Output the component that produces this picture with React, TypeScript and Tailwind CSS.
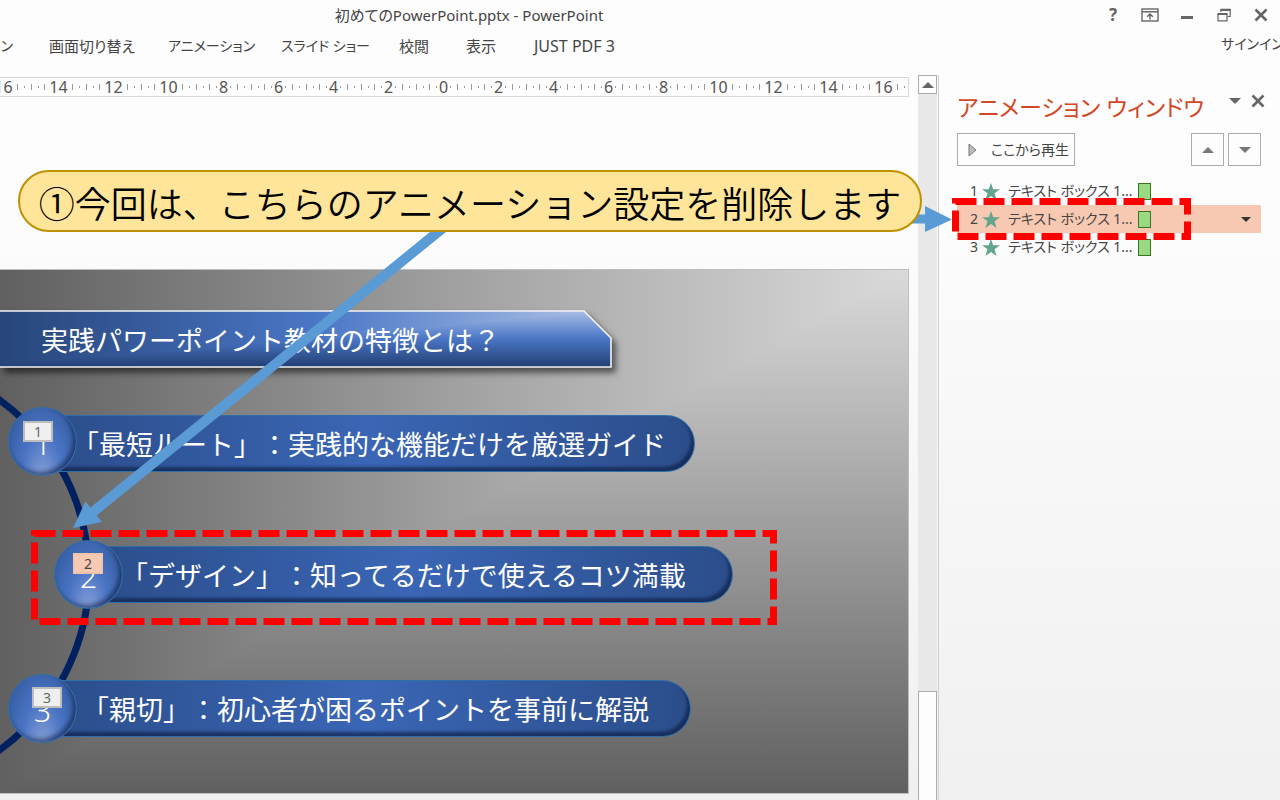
import React from 'react';

const TABS = [
  { label: '画面切り替え', size: 'w-[119px]' },
  { label: 'アニメーション', size: 'w-[113px] text-sm' },
  { label: 'スライド ショー', size: 'w-[118px] text-sm' },
  { label: '校閲', size: 'w-[67px]' },
  { label: '表示', size: 'w-[68px]' },
  { label: 'JUST PDF 3', size: 'text-base' },
];

const RULER = [16, 14, 12, 10, 8, 6, 4, 2, 0, 2, 4, 6, 8, 10, 12, 14, 16];

const ANIMATIONS = [
  { id: 1, label: 'テキスト ボックス 1...', selected: false },
  { id: 2, label: 'テキスト ボックス 1...', selected: true },
  { id: 3, label: 'テキスト ボックス 1...', selected: false },
];

const POINTS = [
  {
    id: 1,
    text: '「最短ルート」：実践的な機能だけを厳選ガイド',
    place: 'left-[8px] top-[137px]',
    pill: 'mt-1 pl-[27px] pr-[28px]',
    tag: 'left-[14px] top-[13px] border-[#bdbdbd] bg-[#efefef] text-[#666]',
  },
  {
    id: 2,
    text: '「デザイン」：知ってるだけで使えるコツ満載',
    place: 'left-[54px] top-[270px]',
    pill: 'pl-[30px] pr-[46px]',
    tag: 'left-[18px] top-[12px] border-[#f0c3ad] bg-[#f8c9b2] text-[#444]',
  },
  {
    id: 3,
    text: '「親切」：初心者が困るポイントを事前に解説',
    place: 'left-[8px] top-[404px]',
    pill: 'pl-[37px] pr-[41px]',
    tag: 'left-[23px] top-[12px] border-[#bdbdbd] bg-[#efefef] text-[#666]',
  },
];

function CloseIcon() {
  return (
    <svg width="14" height="14" viewBox="0 0 14 14" stroke="#666" strokeWidth="2.6" fill="none">
      <path d="M1.500 1.500 12.500 12.500M12.500 1.500 1.500 12.500" />
    </svg>
  );
}

function Triangle({ up = false, color = '#666' }: { up?: boolean; color?: string }) {
  return (
    <svg width="12" height="6" viewBox="0 0 12 6" fill={color}>
      <path d={up ? 'M0 6 6 0 12 6Z' : 'M0 0H12L6 6Z'} />
    </svg>
  );
}

function Header() {
  return (
    <header className="flex h-[75px] shrink-0 text-[15px] text-[#444]">
      <div className="min-w-0 flex-1">
        <h1 className="flex h-[30px] items-center justify-center">初めてのPowerPoint.pptx - PowerPoint</h1>
        <nav className="flex h-8 items-center whitespace-nowrap">
          <a href="#design" className="mr-9 flex w-[13px] justify-end overflow-hidden text-sm">
            デザイン
          </a>
          {TABS.map((tab) => (
            <a key={tab.label} href="#tab" className={tab.size}>
              {tab.label}
            </a>
          ))}
        </nav>
      </div>
      <div className="w-[342px] shrink-0 overflow-hidden">
        <div className="flex h-[29px] items-center justify-end gap-[19px] pr-2.5">
          <button aria-label="ヘルプ" className="flex w-[18px] justify-center text-[17px] font-bold text-[#666]">
            ?
          </button>
          <button aria-label="リボンの表示オプション">
            <svg width="18" height="14" viewBox="0 0 18 14" fill="none" stroke="#666" strokeWidth="1.4">
              <rect x="1" y="1" width="16" height="12" />
              <path d="M1 3.800H17M9 11.500V6M6.200 8.800 9 6l2.800 2.800" />
            </svg>
          </button>
          <button aria-label="最小化" className="flex w-[18px] justify-center">
            <svg width="12" height="14" viewBox="0 0 12 14">
              <rect y="8" width="12" height="3" fill="#666" />
            </svg>
          </button>
          <button aria-label="元に戻す" className="flex w-[18px] justify-center">
            <svg width="14" height="14" viewBox="0 0 14 14" fill="none" stroke="#666">
              <path d="M4 4V1.500H13.200V8.500H10.500" strokeWidth="1.2" />
              <path d="M3.500 1.800H13.500M.5 6H10.500" strokeWidth="2.2" />
              <path d="M1 6V12.800H10V6" strokeWidth="1.2" />
            </svg>
          </button>
          <button aria-label="閉じる" className="flex w-[18px] justify-center">
            <CloseIcon />
          </button>
        </div>
        <a href="#signin" className="ml-[283px] flex h-[30px] items-center text-sm whitespace-nowrap">
          サインイン
        </a>
      </div>
    </header>
  );
}

function Ruler() {
  return (
    <div className="mt-0.5 mr-[9px] h-5 overflow-hidden border-y border-r border-[#d9d9d9] bg-[#fdfdfd] text-base text-[#555]">
      <div className="-ml-6 flex h-full">
        {RULER.map((n, i) => (
          <div key={i} className="relative flex w-[55px] shrink-0 items-center justify-center">
            <svg className="absolute inset-0" width="55" height="18" viewBox="0 0 55 18" stroke="#999">
              <path d="M.5 6v6M13.500 6v6M41.500 6v6M7.500 8v2M20.500 8v2M34.500 8v2M48.500 8v2" />
            </svg>
            <span className="relative bg-[#fdfdfd] leading-4">{n}</span>
          </div>
        ))}
      </div>
    </div>
  );
}

function Banner() {
  return (
    <div className="absolute top-[40px] left-0">
      <svg
        className="absolute top-0 left-0 drop-shadow-[4px_5px_3px_rgba(0,0,0,0.55)]"
        width="613"
        height="58"
        viewBox="0 0 613 58"
      >
        <defs>
          <linearGradient id="bannerX">
            <stop offset="0" stopColor="#264478" />
            <stop offset="0.52" stopColor="#4a76c6" />
            <stop offset="1" stopColor="#b0c4e8" />
          </linearGradient>
          <linearGradient id="bannerY" x2="0" y2="1">
            <stop offset="0" stopColor="#a8bde3" />
            <stop offset="0.5" stopColor="#4a76c6" />
            <stop offset="1" stopColor="#223f72" />
          </linearGradient>
        </defs>
        <g className="isolate">
          <path d="M-4 1H584L611 28V57H-4Z" fill="url(#bannerX)" />
          <path className="mix-blend-darken" d="M-4 1H584L611 28V57H-4Z" fill="url(#bannerY)" />
        </g>
        <path d="M-4 1H584L611 28V57H-4Z" fill="none" stroke="#f4f4f4" strokeWidth="1.6" />
      </svg>
      <h2 className="relative flex h-[58px] items-center pt-1 pl-[41px] text-[27px] whitespace-nowrap text-white">
        実践パワーポイント教材の特徴とは？
      </h2>
    </div>
  );
}

function Slide() {
  return (
    <section className="relative mt-[172px] mr-[9px] mb-1.5 min-h-[525px] flex-1 overflow-hidden border-y border-r border-[#bdbdbd] bg-[linear-gradient(to_right,#606060,#a4a4a4_53%,#dadada),linear-gradient(to_bottom,#dadada,#606060)] bg-blend-darken">
      <svg className="absolute top-0 left-0" width="100" height="525" viewBox="0 0 100 525" fill="none">
        <circle cx="-127" cy="305" r="216" stroke="#002060" strokeWidth="7" />
      </svg>
      <Banner />
      {POINTS.map((p) => (
        <div key={p.id} className={`absolute flex items-center ${p.place}`}>
          <div className="relative z-[1] flex size-[69px] items-center justify-center rounded-full border border-[#2f6fa8] bg-[radial-gradient(ellipse_at_50%_110%,#8ca3d8,#4a74c4_45%,#2f5597)] pt-1 text-3xl font-light text-white shadow-[inset_-3px_-3px_4px_rgba(16,34,74,0.6)]">
            {p.id}
            <span
              className={`absolute flex h-[21px] w-[30px] items-center justify-center border-2 text-sm font-normal ${p.tag}`}
            >
              {p.id}
            </span>
          </div>
          <p
            className={`-ml-[33px] flex h-[57px] items-center rounded-r-full border border-[#2f6fa8] bg-linear-to-r from-[#2b4d8a] via-[#3a66b5] to-[#2b4d8a] pt-1 text-[27px] whitespace-nowrap text-white shadow-[inset_-3px_-4px_3px_rgba(16,34,74,0.7)] ${p.pill}`}
          >
            {p.text}
          </p>
        </div>
      ))}
      <svg className="absolute top-[260px] left-[31px]" width="746" height="95" viewBox="0 0 746 95" fill="none">
        <rect x="3.5" y="3.5" width="739" height="88" stroke="#f00" strokeWidth="7" strokeDasharray="21 7" />
      </svg>
    </section>
  );
}

function Callout() {
  return (
    <div className="pointer-events-none absolute top-[95px] left-[18px] z-10">
      {/* arrows to the slide item and to the list entry */}
      <svg
        className="absolute top-0 left-0 overflow-visible"
        width="936"
        height="360"
        viewBox="0 0 936 360"
        fill="#5b9bd5"
      >
        <path d="M436 49 75 342" stroke="#5b9bd5" strokeWidth="10" />
        <path d="M55 358 67.500 331.500 84 352Z" />
        <path d="M890 44.500H907V36L934 49.500 907 62V53.500H890Z" />
      </svg>
      <p className="relative flex h-[62px] w-[904px] items-center justify-center rounded-full border-2 border-[#bf9000] bg-[#ffe599] pt-2 text-4xl font-[350] whitespace-nowrap text-black">
        ①今回は、こちらのアニメーション設定を削除します
      </p>
    </div>
  );
}

function Scrollbar() {
  return (
    <div className="flex w-[19px] shrink-0 flex-col bg-[#e8e8e8]">
      <button
        aria-label="上へスクロール"
        className="flex h-[19px] items-center justify-center border border-[#ababab] bg-[#fdfdfd]"
      >
        <Triangle up />
      </button>
      <div className="flex-1" />
      <div className="h-[109px] border border-b-0 border-[#ababab] bg-[#fdfdfd]" />
    </div>
  );
}

function AnimationPane() {
  return (
    <aside className="ml-px w-[342px] shrink-0 border-l border-[#cfcfcf] pt-4 pr-[19px] pl-[18px] text-[#444]">
      <div className="flex h-8 items-center">
        <h2 className="flex-1 text-[23px] whitespace-nowrap text-[#d24726]">アニメーション ウィンドウ</h2>
        <div className="mb-3 flex items-center gap-2.5">
          <button aria-label="作業ウィンドウ オプション">
            <Triangle />
          </button>
          <button aria-label="作業ウィンドウを閉じる" className="-mr-1">
            <CloseIcon />
          </button>
        </div>
      </div>
      <div className="mt-2.5 flex h-[33px] gap-1 text-sm">
        <button className="flex w-[118px] items-center gap-3.5 border border-[#ababab] bg-[#fdfdfd] pl-2.5 whitespace-nowrap">
          <svg width="9" height="14" viewBox="0 0 9 14" fill="#bbb" stroke="#777">
            <path d="M1 1 8 7 1 13Z" />
          </svg>
          ここから再生
        </button>
        <button
          aria-label="前に移動"
          className="ml-auto flex w-[33px] items-center justify-center border border-[#ababab] bg-[#fdfdfd]"
        >
          <Triangle up color="#777" />
        </button>
        <button
          aria-label="後に移動"
          className="flex w-[33px] items-center justify-center border border-[#ababab] bg-[#fdfdfd]"
        >
          <Triangle color="#777" />
        </button>
      </div>
      <ul className="relative mt-[11px] text-sm">
        {ANIMATIONS.map((a) => (
          <li key={a.id} className={`flex h-7 items-center pl-[13px] ${a.selected ? 'bg-[#f8c9b2]' : ''}`}>
            <span className="w-3">{a.id}</span>
            <svg width="18" height="17" viewBox="0 0 18 17" fill="#62a58c">
              <path d="M9 0 11.200 6.300H18L12.500 10.300 14.600 17 9 12.900 3.400 17 5.500 10.300 0 6.300H6.800Z" />
            </svg>
            <span className="ml-2 w-[130px] whitespace-nowrap">{a.label}</span>
            <span className="h-[17px] w-[13px] border border-[#38761d] bg-[#99d984]" />
            {a.selected && (
              <button aria-label="効果のオプション" className="mr-2.5 ml-auto">
                <svg width="10" height="5" viewBox="0 0 10 5" fill="#333">
                  <path d="M0 0H10L5 5Z" />
                </svg>
              </button>
            )}
          </li>
        ))}
        <svg className="absolute top-[21px] -left-[5px]" width="239" height="42" viewBox="0 0 239 42" fill="none">
          <rect x="3.5" y="3.5" width="232" height="35" stroke="#f00" strokeWidth="7" strokeDasharray="21 7" />
        </svg>
      </ul>
    </aside>
  );
}

export default function App() {
  return (
    <div className="flex min-h-screen flex-col overflow-hidden bg-linear-to-b from-[#fdfdfd] from-20% to-[#f0f0f0] font-['Noto_Sans','Noto_Sans_CJK_JP',sans-serif]">
      <div className="flex flex-1 flex-col [font-feature-settings:'palt']">
        <Header />
        <main className="flex flex-1">
          <div className="relative flex min-w-0 flex-1 flex-col [font-feature-settings:normal] [text-spacing-trim:space-all]">
            <Ruler />
            <Slide />
            <Callout />
          </div>
          <Scrollbar />
          <AnimationPane />
        </main>
      </div>
    </div>
  );
}
